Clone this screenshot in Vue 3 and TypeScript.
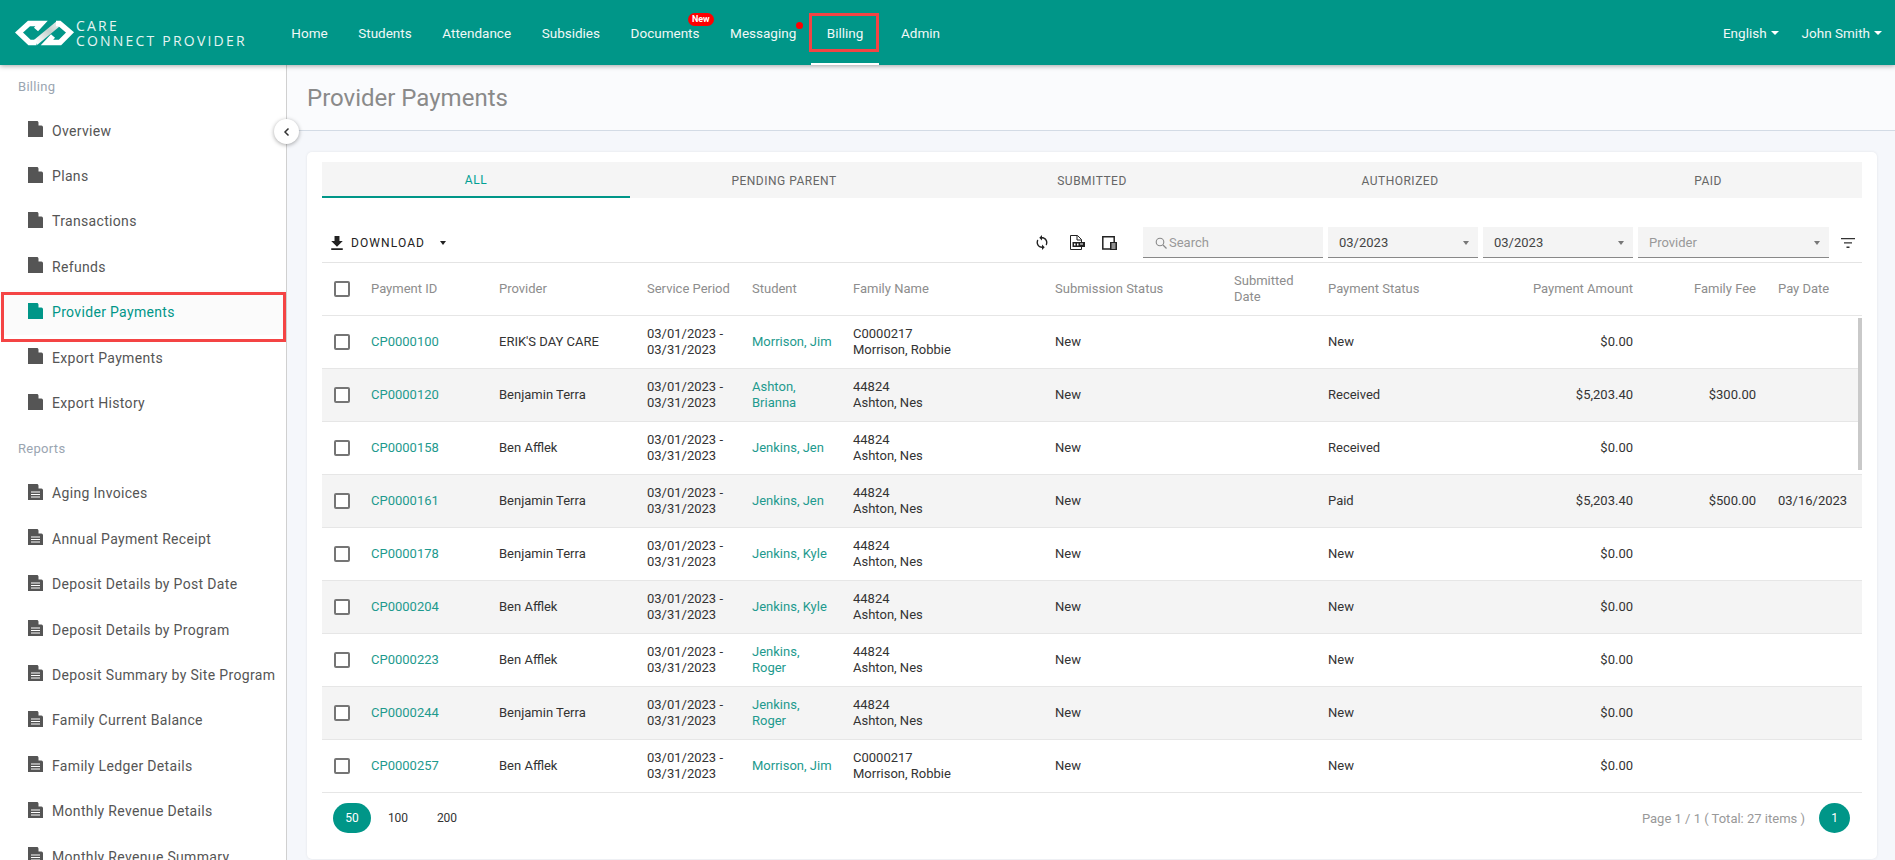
<script setup lang="ts">
interface Row {
  id: string
  provider: string
  student: string
  familyId: string
  family: string
  payStatus: string
  amount: string
  fee: string
  payDate: string
}

const navItems = ['Home', 'Students', 'Attendance', 'Subsidies', 'Documents', 'Messaging', 'Billing', 'Admin']
const billingItems = ['Overview', 'Plans', 'Transactions', 'Refunds', 'Provider Payments', 'Export Payments', 'Export History']
const reportItems = [
  'Aging Invoices',
  'Annual Payment Receipt',
  'Deposit Details by Post Date',
  'Deposit Details by Program',
  'Deposit Summary by Site Program',
  'Family Current Balance',
  'Family Ledger Details',
  'Monthly Revenue Details',
  'Monthly Revenue Summary',
]
const tabs = ['All', 'Pending Parent', 'Submitted', 'Authorized', 'Paid']

const mk = (id: string, provider: string, student: string, familyId: string, family: string, payStatus: string, amount: string, fee = '', payDate = ''): Row => ({
  id, provider, student, familyId, family, payStatus, amount, fee, payDate,
})

const rows: Row[] = [
  mk('CP0000100', "ERIK'S DAY CARE", 'Morrison, Jim', 'C0000217', 'Morrison, Robbie', 'New', '$0.00'),
  mk('CP0000120', 'Benjamin Terra', 'Ashton, Brianna', '44824', 'Ashton, Nes', 'Received', '$5,203.40', '$300.00'),
  mk('CP0000158', 'Ben Afflek', 'Jenkins, Jen', '44824', 'Ashton, Nes', 'Received', '$0.00'),
  mk('CP0000161', 'Benjamin Terra', 'Jenkins, Jen', '44824', 'Ashton, Nes', 'Paid', '$5,203.40', '$500.00', '03/16/2023'),
  mk('CP0000178', 'Benjamin Terra', 'Jenkins, Kyle', '44824', 'Ashton, Nes', 'New', '$0.00'),
  mk('CP0000204', 'Ben Afflek', 'Jenkins, Kyle', '44824', 'Ashton, Nes', 'New', '$0.00'),
  mk('CP0000223', 'Ben Afflek', 'Jenkins, Roger', '44824', 'Ashton, Nes', 'New', '$0.00'),
  mk('CP0000244', 'Benjamin Terra', 'Jenkins, Roger', '44824', 'Ashton, Nes', 'New', '$0.00'),
  mk('CP0000257', 'Ben Afflek', 'Morrison, Jim', 'C0000217', 'Morrison, Robbie', 'New', '$0.00'),
]
</script>

<template>
  <div class="app">
    <header class="topbar">
      <div class="logo">
        <svg class="logo-mark" width="60" height="28" viewBox="15 20 60 28">
          <defs>
            <linearGradient id="band" gradientUnits="userSpaceOnUse" x1="36" y1="44" x2="58" y2="24">
              <stop offset="0" stop-color="#ffffff" />
              <stop offset="0.6" stop-color="#c3d0cd" />
              <stop offset="1" stop-color="#e4ecea" />
            </linearGradient>
          </defs>
          <path d="M35 44H37.500L58 24H61V29H59.500L39 49H35Z" fill="none" />
          <path d="M35.500 43.500 58.500 24.500" fill="none" stroke="url(#band)" stroke-width="6" />
          <path d="M36 30.500 41.500 24.500H29L19 33.500 29.500 43.500H36.500" fill="none" stroke="#fff" stroke-width="5.500" />
          <path d="M53 37 47 43.500H60L70 33.500 59.500 24.500H56" fill="none" stroke="#fff" stroke-width="5.500" />
        </svg>
        <div class="logo-text">
          <span>CARE</span>
          <span>CONNECT PROVIDER</span>
        </div>
      </div>
      <nav class="nav">
        <a v-for="item in navItems" :key="item" class="nav-link" :class="{ active: item === 'Billing' }">
          {{ item }}
          <span v-if="item === 'Documents'" class="badge-new">New</span>
          <span v-if="item === 'Messaging'" class="dot"></span>
          <span v-if="item === 'Billing'" class="mark mark-nav"></span>
        </a>
      </nav>
      <div class="top-right">
        <a class="top-menu">English<i class="caret"></i></a>
        <a class="top-menu">John Smith<i class="caret"></i></a>
      </div>
    </header>

    <div class="body">
      <aside class="sidebar">
        <div class="side-label first">Billing</div>
        <a v-for="item in billingItems" :key="item" class="side-item" :class="{ current: item === 'Provider Payments' }">
          <svg class="doc" width="15" height="16" viewBox="0 0 15 16"><path d="M0 0h9.500L15 5.500V16H0z" /><path class="fold" d="M10.500 0 15 4.500h-4.500z" /></svg>
          <span>{{ item }}</span>
          <span v-if="item === 'Provider Payments'" class="mark mark-side"></span>
        </a>
        <div class="side-label">Reports</div>
        <a v-for="item in reportItems" :key="item" class="side-item">
          <svg class="doc" width="15" height="16" viewBox="0 0 15 16"><path d="M0 0h9.500L15 5.500V16H0z" /><path class="fold" d="M10.500 0 15 4.500h-4.500z" /><path class="fold" d="M3 7.500h9v1H3zM3 10h9v1H3zM3 12.500h9v1H3z" /></svg>
          <span>{{ item }}</span>
        </a>
      </aside>

      <main class="main">
        <button class="collapse" type="button" aria-label="Collapse">
          <svg width="8" height="10" viewBox="0 0 8 10"><path d="M5.500 1.500 2 5l3.500 3.500" fill="none" stroke="#333" stroke-width="1.500" /></svg>
        </button>
        <div class="title-band"><h1>Provider Payments</h1></div>
        <section class="card">
          <div class="tabs">
            <div v-for="(tab, i) in tabs" :key="tab" class="tab" :class="{ on: i === 0 }">{{ tab }}</div>
          </div>

          <div class="toolbar">
            <button class="download" type="button">
              <svg width="14" height="14" viewBox="5 3 14 17"><path d="M19 9h-4V3H9v6H5l7 7 7-7zM5 18v2h14v-2H5z" fill="#222" /></svg>
              <span>DOWNLOAD</span>
              <i class="caret dark"></i>
            </button>
            <div class="tools">
              <svg class="tool t-sync" width="12" height="15" viewBox="4 1 16 22"><path d="M12 4V1L8 5l4 4V6c3.310 0 6 2.690 6 6 0 1.010-.25 1.970-.7 2.800l1.460 1.460C19.540 15.030 20 13.570 20 12c0-4.420-3.580-8-8-8zm0 14c-3.310 0-6-2.690-6-6 0-1.010.25-1.970.7-2.800L5.240 7.740C4.460 8.970 4 10.430 4 12c0 4.420 3.580 8 8 8v3l4-4-4-4v3z" fill="#222" /></svg>
              <svg class="tool t-pdf" width="15" height="15" viewBox="0 0 15 15"><path d="M.5.500h7l4 4v10H.5z" fill="none" stroke="#222" /><path d="M7 .5v4.500h4.500" fill="none" stroke="#222" /><rect x="2.500" y="7" width="12.500" height="5" fill="#222" /><path d="M4 8.500h1.500v2H4zM7 8.500h1.500v2H7zM10 8.500h3v1h-3z" fill="#fff" /></svg>
              <svg class="tool" width="15" height="14" viewBox="0 0 15 14"><path d="M8 13H.8V.8h11.400V6" fill="none" stroke="#222" stroke-width="1.500" /><rect x="8" y="6" width="7" height="8" fill="#222" /><path d="M9.500 7.500h4v1h-4zM9.500 9.500h4v1h-4zM9.500 11.500h4v1h-4z" fill="#fff" /></svg>
            </div>
            <div class="field f-search">
              <svg width="12" height="12" viewBox="0 0 12 12"><circle cx="5" cy="5" r="3.800" fill="none" stroke="#888" stroke-width="1.100" /><path d="m8 8 3.500 3.500" stroke="#888" stroke-width="1.200" /></svg>
              <span class="ph">Search</span>
            </div>
            <div class="field f-date"><span>03/2023</span><i class="tri"></i></div>
            <div class="field f-date"><span>03/2023</span><i class="tri"></i></div>
            <div class="field f-prov"><span class="ph">Provider</span><i class="tri"></i></div>
            <svg class="filter" width="14" height="10" viewBox="0 0 14 10"><path d="M0 0h14v1.300H0zM3 4.300h8v1.300H3zM5.500 8.600h3V10h-3z" fill="#333" /></svg>
          </div>

          <div class="table">
            <div class="grid head">
              <div class="c-check"><span class="box"></span></div>
              <div>Payment ID</div>
              <div>Provider</div>
              <div>Service Period</div>
              <div>Student</div>
              <div>Family Name</div>
              <div>Submission Status</div>
              <div class="c-sub">Submitted Date</div>
              <div>Payment Status</div>
              <div class="right">Payment Amount</div>
              <div class="right">Family Fee</div>
              <div class="c-date">Pay Date</div>
            </div>
            <div v-for="(row, i) in rows" :key="row.id" class="grid row" :class="{ alt: i % 2 === 1 }">
              <div class="c-check"><span class="box"></span></div>
              <a class="link">{{ row.id }}</a>
              <div>{{ row.provider }}</div>
              <div>03/01/2023 -<br />03/31/2023</div>
              <a class="link c-student">{{ row.student }}</a>
              <div>{{ row.familyId }}<br />{{ row.family }}</div>
              <div>New</div>
              <div></div>
              <div>{{ row.payStatus }}</div>
              <div class="right">{{ row.amount }}</div>
              <div class="right">{{ row.fee }}</div>
              <div class="c-date">{{ row.payDate }}</div>
            </div>
            <div class="scroll-thumb"></div>
          </div>

          <div class="pager">
            <div class="sizes">
              <span class="size on">50</span>
              <span class="size">100</span>
              <span class="size">200</span>
            </div>
            <div class="pages">
              <span class="page-info">Page 1 / 1 ( Total: 27 items )</span>
              <span class="page-btn">1</span>
            </div>
          </div>
        </section>
      </main>
    </div>
  </div>
</template>

<style scoped>
.app {
  height: 860px;
  display: flex;
  flex-direction: column;
  overflow: hidden;
  font-family: Roboto, "Liberation Sans", sans-serif;
  font-size: 13px;
  color: #333;
}
.topbar {
  height: 65px;
  flex: none;
  display: flex;
  align-items: center;
  background: #009688;
  box-shadow: 0 1px 5px rgba(0, 0, 0, 0.35);
  color: #fff;
  position: relative;
  z-index: 3;
}
.logo {
  width: 276px;
  flex: none;
  display: flex;
  align-items: center;
  padding-left: 15px;
  box-sizing: border-box;
}
.logo-mark {
  flex: none;
}
.logo-text {
  display: flex;
  flex-direction: column;
  margin-left: 1px;
  font-family: "Open Sans", sans-serif;
  font-size: 14px;
  line-height: 15px;
  letter-spacing: 2.2px;
  color: #e6f4f2;
  white-space: nowrap;
}
.nav {
  display: flex;
  height: 100%;
}
.nav-link {
  position: relative;
  display: flex;
  align-items: center;
  padding: 0 15.300px;
  font-size: 13.500px;
  color: #f1f8f7;
  white-space: nowrap;
}
.nav-link.active {
  margin-right: 7px;
}
.nav-link.active::after {
  content: "";
  position: absolute;
  left: -1px;
  right: 0;
  bottom: 0;
  height: 2px;
  background: #fff;
}
.badge-new {
  position: absolute;
  top: 13px;
  right: 1px;
  width: 26px;
  height: 13px;
  border-radius: 7px;
  background: #f00;
  color: #fff;
  font-size: 9px;
  font-weight: 700;
  line-height: 13px;
  text-align: center;
}
.dot {
  position: absolute;
  top: 22px;
  right: 9px;
  width: 7px;
  height: 7px;
  border-radius: 50%;
  background: #f00;
}
.mark {
  position: absolute;
  border: 3px solid #f44444;
  box-sizing: border-box;
  pointer-events: none;
}
.mark-nav {
  left: -3px;
  right: 0;
  top: 13px;
  height: 39px;
}
.mark-side {
  left: 1px;
  right: 0;
  top: 2.400px;
  bottom: -7px;
}
.top-right {
  margin-left: auto;
  display: flex;
  gap: 23px;
  padding-right: 13px;
}
.top-menu {
  display: flex;
  align-items: center;
  font-size: 13.500px;
  color: #f1f8f7;
}
.caret {
  display: inline-block;
  width: 0;
  height: 0;
  margin-left: 4px;
  border-left: 4px solid transparent;
  border-right: 4px solid transparent;
  border-top: 4px solid #fff;
}
.caret.dark {
  border-left-width: 3.500px;
  border-right-width: 3.500px;
  border-top-color: #222;
  margin-left: 15px;
}
.body {
  flex: 1;
  display: flex;
  min-height: 0;
}
.sidebar {
  width: 287px;
  flex: none;
  box-sizing: border-box;
  border-right: 1px solid #d0d0d0;
  background: #fff;
  overflow: hidden;
}
.side-label {
  height: 45px;
  box-sizing: border-box;
  padding: 0 18px;
  display: flex;
  align-items: center;
  font-size: 13px;
  letter-spacing: 0.3px;
  color: #9aa5b1;
}
.side-label.first {
  height: 43px;
}
.side-item {
  position: relative;
  height: 45.400px;
  display: flex;
  align-items: center;
  padding-left: 28px;
  font-size: 14px;
  letter-spacing: 0.33px;
  color: #555;
  white-space: nowrap;
}
.doc {
  flex: none;
  margin-right: 9px;
  margin-top: -3px;
  fill: #555;
}
.fold {
  fill: #fff;
}
.side-item.current {
  color: #009688;
  background: #fbfbfb;
}
.side-item.current .doc {
  fill: #009688;
}
.main {
  position: relative;
  flex: 1;
  min-width: 0;
  background: #f5f7fb;
  display: flex;
  flex-direction: column;
}
.collapse {
  position: absolute;
  left: -13px;
  top: 54px;
  width: 25px;
  height: 25px;
  padding: 0;
  border: none;
  border-radius: 50%;
  background: #fff;
  box-shadow: 0 1px 4px rgba(0, 0, 0, 0.35);
  display: flex;
  align-items: center;
  justify-content: center;
  z-index: 2;
}
.title-band {
  height: 66px;
  flex: none;
  box-sizing: border-box;
  padding-left: 20px;
  display: flex;
  align-items: center;
  background: #fafbfd;
  border-bottom: 1px solid #d3dbe5;
}
h1 {
  margin: 0;
  font-size: 24px;
  font-weight: 400;
  color: #8a8a8a;
}
.card {
  flex: 1;
  margin: 21px 18px 1px 20px;
  padding: 10px 15px 0;
  background: #fff;
  border-radius: 5px;
  box-shadow: 0 0 3px rgba(0, 0, 0, 0.08);
}
.tabs {
  display: grid;
  grid-template-columns: repeat(5, 1fr);
  height: 36px;
  background: #f5f5f5;
}
.tab {
  display: flex;
  align-items: center;
  justify-content: center;
  padding-top: 2px;
  box-sizing: border-box;
  font-size: 12px;
  letter-spacing: 0.5px;
  text-transform: uppercase;
  color: #666;
}
.tab.on {
  color: #00a094;
  border-bottom: 2px solid #009688;
}
.toolbar {
  display: flex;
  align-items: center;
  margin-top: 29px;
  height: 31px;
  padding-bottom: 4px;
  box-sizing: content-box;
  border-bottom: 1px solid #e4e4e4;
}
.download {
  display: flex;
  align-items: center;
  padding: 1px 0 0 8px;
  border: none;
  background: none;
  font: inherit;
  font-size: 12px;
  letter-spacing: 1.1px;
  color: #222;
}
.download span {
  margin-left: 7px;
}
.tools {
  margin-left: auto;
  display: flex;
  align-items: center;
  margin-right: 26px;
}
.tool {
  display: block;
}
.t-sync {
  margin-right: 22px;
}
.t-pdf {
  margin-right: 17px;
}
.field {
  height: 31px;
  box-sizing: border-box;
  display: flex;
  align-items: center;
  background: #f4f4f4;
  border-bottom: 1px solid #888;
  padding: 1px 9px 0 11px;
  margin-right: 5px;
  font-size: 13px;
  color: #444;
}
.f-search {
  width: 180px;
  gap: 2px;
  padding-left: 12px;
}
.f-date {
  width: 150px;
}
.f-prov {
  width: 191px;
  margin-right: 0;
}
.ph {
  color: #999;
}
.tri {
  margin-left: auto;
  width: 0;
  height: 0;
  border-left: 3.500px solid transparent;
  border-right: 3.500px solid transparent;
  border-top: 4px solid #777;
}
.filter {
  margin-left: 12px;
  margin-right: 7px;
  flex: none;
}
.table {
  position: relative;
}
.grid {
  display: grid;
  grid-template-columns: 49px 128px 148px 105px 101px 202px 179px 94px 172px 133px 123px 106px;
  align-items: center;
  line-height: 16px;
  border-bottom: 1px solid #e6e6e6;
  box-sizing: border-box;
  height: 53px;
  color: #333;
}
.head {
  height: 53px;
  color: #8d8d8d;
}
.alt {
  background: #f4f4f4;
}
.c-check {
  padding-left: 12px;
  display: flex;
}
.box {
  width: 16px;
  height: 16px;
  box-sizing: border-box;
  border: 2px solid #757575;
  border-radius: 2px;
  background: #fff;
}
.link {
  color: #1e9a8e;
}
.c-student {
  padding-right: 20px;
}
.c-sub {
  padding-right: 30px;
}
.right {
  text-align: right;
}
.c-date {
  padding-left: 22px;
  white-space: nowrap;
}
.scroll-thumb {
  position: absolute;
  right: 0;
  top: 55px;
  width: 4px;
  height: 152px;
  background: #c9c9c9;
}
.pager {
  display: flex;
  justify-content: space-between;
  align-items: center;
  margin-top: 10px;
  padding: 0 12px 0 11px;
}
.sizes {
  display: flex;
  align-items: center;
  font-size: 12px;
}
.size {
  width: 38px;
  height: 30px;
  margin-right: 11px;
  display: flex;
  align-items: center;
  justify-content: center;
  color: #333;
}
.size.on {
  border-radius: 15px;
  background: #009688;
  color: #fff;
  margin-right: 8px;
}
.pages {
  display: flex;
  align-items: center;
  gap: 14px;
}
.page-info {
  font-size: 13px;
  color: #999;
}
.page-btn {
  width: 31px;
  height: 30px;
  border-radius: 50%;
  background: #009688;
  color: #fff;
  font-size: 12px;
  display: flex;
  align-items: center;
  justify-content: center;
}
</style>

<style>
html,
body {
  margin: 0;
  overflow: hidden;
}
</style>
